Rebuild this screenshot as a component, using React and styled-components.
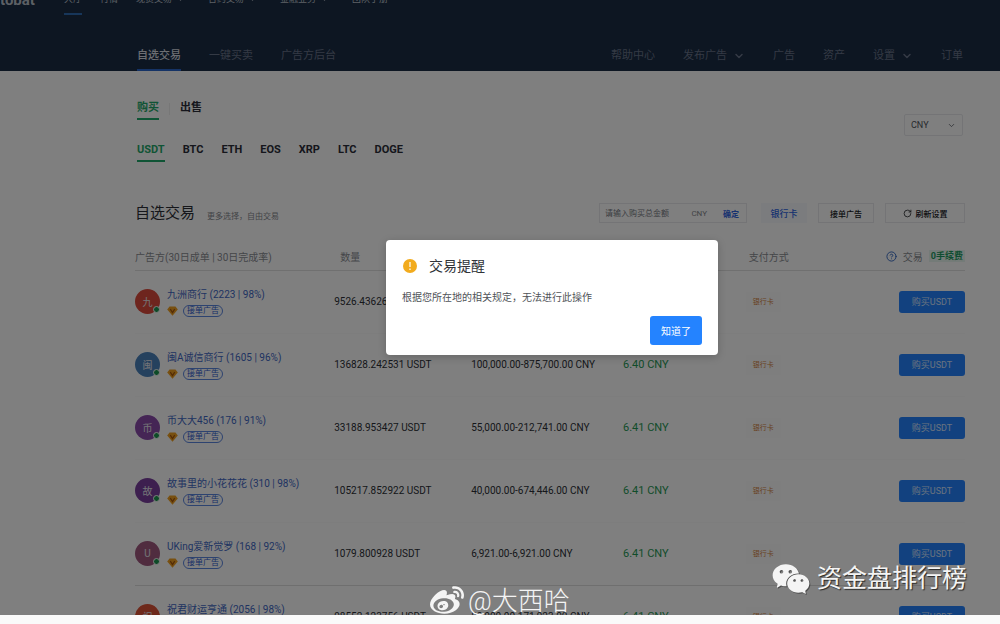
import React, { useState } from 'react';
import styled, { createGlobalStyle } from 'styled-components';
import { FaWeibo } from 'react-icons/fa';
import { AiFillWechat } from 'react-icons/ai';
import { ChevronDown, RotateCw, CircleHelp } from 'lucide-react';

const GlobalStyle = createGlobalStyle`
    * {
        box-sizing: border-box;
    }

    body {
        margin: 0;
        background: #fafafa;
        color: #2c2f36;
        font-family: Roboto, 'Noto Sans CJK SC', sans-serif;
        font-size: 10px;
    }

    button,
    input,
    select {
        font-family: inherit;
    }

    a {
        color: inherit;
        text-decoration: none;
    }
`;

const Screen = styled.div`
    position: relative;
    height: calc(100vh - 9px);
    overflow: hidden;
    background: #fff;
`;

const Header = styled.header`
    background: #1a2c44;
`;

const TopNav = styled.nav`
    display: flex;
    align-items: flex-end;
    height: 15px;
    overflow: hidden;
    color: #b9c0ca;
`;

const Logo = styled.a`
    width: 64px;
    font-size: 15px;
    font-weight: 700;
    line-height: 18px;
    padding-bottom: 6px;
`;

const TopLink = styled.a`
    display: flex;
    align-items: center;
    gap: 4px;
    margin-right: ${(props) => (props.$menu ? 23 : 18)}px;
    padding-bottom: 7px;
    border-bottom: 2px solid ${(props) => (props.$active ? '#2f6db5' : 'transparent')};
    font-size: 9px;
    line-height: 14px;
    white-space: nowrap;
`;

const SubNav = styled.nav`
    display: flex;
    justify-content: space-between;
    padding: 29px 37px 0 137px;
`;

const NavGroup = styled.div`
    display: flex;
    gap: 28px;
`;

const NavLink = styled.a`
    display: flex;
    align-items: center;
    gap: 6px;
    padding-bottom: 1px;
    border-bottom: 2px solid ${(props) => (props.$active ? '#2a66cc' : 'transparent')};
    color: ${(props) => (props.$active ? '#d9dde4' : '#69748a')};
    font-size: 11px;
    font-weight: ${(props) => (props.$active ? 500 : 400)};
    line-height: 24px;
`;

const Content = styled.main`
    padding: 26px 35px 0 135px;
`;

const Filters = styled.section`
    display: flex;
    justify-content: space-between;
    align-items: flex-start;
`;

const Tabs = styled.div`
    display: flex;
    align-items: center;
    gap: ${(props) => props.$gap}px;
    margin-bottom: 19px;
    padding-left: 2px;
`;

const Tab = styled.button`
    padding: 2px 0 1px;
    border: 0;
    border-bottom: 2px solid ${(props) => (props.$active ? '#1fa86a' : 'transparent')};
    background: none;
    color: ${(props) => (props.$active ? '#1fa86a' : '#2a2d38')};
    font-size: 11px;
    font-weight: 700;
    line-height: 18px;
`;

const TabDivider = styled.span`
    width: 1px;
    height: 12px;
    background: #efefef;
`;

const SelectBox = styled.label`
    display: flex;
    align-items: center;
    width: 59px;
    height: 22px;
    margin-top: 17px;
    margin-right: 2px;
    padding: 0 6px;
    border: 1px solid #e8e9ec;
    border-radius: 2px;
    color: #50545c;
`;

const Select = styled.select`
    flex: 1;
    min-width: 0;
    border: 0;
    padding: 0;
    appearance: none;
    background: none;
    color: inherit;
    font-size: 9px;
`;

const Toolbar = styled.section`
    display: flex;
    align-items: center;
    justify-content: space-between;
    margin-top: 22px;
`;

const Heading = styled.div`
    display: flex;
    align-items: center;
    gap: 12px;
`;

const Title = styled.h1`
    margin: 0;
    font-size: 15px;
    font-weight: 400;
    line-height: 20px;
`;

const Hint = styled.span`
    padding-top: 4px;
    color: #85888e;
    font-size: 8px;
`;

const Actions = styled.div`
    display: flex;
    align-items: center;
`;

const AmountBox = styled.form`
    display: flex;
    align-items: center;
    width: 148px;
    height: 20px;
    margin-right: 14px;
    padding: 0 7px 0 5px;
    border: 1px solid #e8e9ec;
    color: #85888e;
    font-size: 8px;
`;

const AmountInput = styled.input`
    flex: 1;
    min-width: 0;
    padding: 0;
    border: 0;
    background: none;
    font-size: 8px;

    &::placeholder {
        color: #777b84;
    }
`;

const ConfirmButton = styled.button`
    margin-left: 16px;
    padding: 0;
    border: 0;
    background: none;
    color: #2c62e0;
    font-size: 8px;
    font-weight: 700;
`;

const ToolButton = styled.button`
    display: flex;
    align-items: center;
    justify-content: center;
    gap: 4px;
    width: ${(props) => props.$width}px;
    height: 20px;
    margin-left: ${(props) => (props.$selected ? 0 : 11)}px;
    padding: 0;
    border: 1px solid ${(props) => (props.$selected ? '#f6f9fd' : '#e8e9ec')};
    background: ${(props) => (props.$selected ? '#f6f9fd' : '#fff')};
    color: ${(props) => (props.$selected ? '#2c62e0' : '#16181c')};
    font-size: ${(props) => (props.$selected ? 9 : 8)}px;
    font-weight: 500;
`;

const Table = styled.table`
    width: 100%;
    margin-top: 20px;
    border-collapse: collapse;
    table-layout: fixed;
    white-space: nowrap;
`;

const HeadCell = styled.th`
    height: 27px;
    padding: 0 0 0 ${(props) => props.$indent || 0}px;
    border-bottom: 1px solid #e0e0e0;
    color: #8a8d93;
    font-weight: 400;
    text-align: left;
`;

const Cell = styled.td`
    height: 63px;
    padding: 0;
    border-bottom: 1px solid #fafafa;
    text-align: left;

    tr:nth-child(5) > & {
        border-bottom-color: #dedede;
    }
`;

const PayRow = styled.div`
    display: flex;
    align-items: center;
    justify-content: space-between;
`;

const TradeHead = styled.div`
    display: flex;
    align-items: center;
    justify-content: flex-end;
    gap: 6px;
`;

const FreeTag = styled.span`
    padding: 0 2px;
    background: #e9f7f0;
    color: #1c9c62;
    font-size: 9px;
    font-weight: 700;
    line-height: 12px;
`;

const Seller = styled.div`
    display: flex;
    align-items: center;
    gap: 7px;
`;

const Avatar = styled.div`
    position: relative;
    display: grid;
    place-items: center;
    width: 25px;
    height: 25px;
    border-radius: 50%;
    background: ${(props) => props.$color};
    color: #e8e8ee;
    font-size: 10px;
`;

const OnlineDot = styled.span`
    position: absolute;
    right: 0;
    bottom: 1px;
    width: 7px;
    height: 7px;
    border: 1px solid #fff;
    border-radius: 50%;
    background: #1d9650;
`;

const SellerName = styled.a`
    display: block;
    color: #3f67c4;
    font-size: 10px;
    line-height: 15px;
`;

const Badges = styled.div`
    display: flex;
    align-items: center;
    gap: 5px;
    margin-top: 3px;
`;

const Pill = styled.span`
    padding: 0 3px;
    border: 1px solid #5b86e0;
    border-radius: 6px;
    color: #2f60cf;
    font-size: 8px;
    line-height: 10px;
`;

const Price = styled.span`
    color: #1f9a55;
    font-size: 11px;
`;

const PayTag = styled.span`
    display: inline-block;
    padding: 4px 7px;
    background: #fdfdfd;
    color: #d2823c;
    font-size: 7px;
    line-height: 12px;
`;

const BuyButton = styled.button`
    width: 66px;
    height: 22px;
    padding: 0;
    border: 0;
    border-radius: 3px;
    background: #2483ff;
    color: #d4e4ff;
    font-size: 9px;
`;

const Overlay = styled.div`
    position: absolute;
    inset: 0;
    display: flex;
    align-items: flex-start;
    justify-content: center;
    padding: 240px 0 0 104px;
    background: rgba(0, 0, 0, 0.5);
`;

const Dialog = styled.div`
    width: 332px;
    padding: 16px 16px 10px;
    border-radius: 4px;
    background: #fff;
    box-shadow: 0 2px 8px rgba(0, 0, 0, 0.2);
`;

const DialogTitle = styled.h2`
    display: flex;
    align-items: center;
    gap: 12px;
    margin: 0;
    padding-left: 1px;
    color: #303338;
    font-size: 14px;
    font-weight: 400;
    line-height: 20px;
`;

const DialogText = styled.p`
    margin: 14px 0 10px;
    color: #505358;
    font-size: 10px;
    line-height: 16px;
`;

const DialogFooter = styled.div`
    display: flex;
    justify-content: flex-end;
`;

const DialogButton = styled.button`
    width: 52px;
    height: 29px;
    padding: 0;
    border: 0;
    border-radius: 3px;
    background: #2483ff;
    color: #fff;
    font-size: 10px;
`;

const Watermark = styled.div`
    position: absolute;
    display: flex;
    align-items: center;
    color: #f4f4f4;
    line-height: 30px;
    white-space: nowrap;
`;

const WeiboMark = styled(Watermark)`
    left: 43%;
    bottom: 6px;
    gap: 4px;
    font-size: 26px;
    font-weight: 300;
`;

const WechatMark = styled(Watermark)`
    right: 33px;
    bottom: 24px;
    gap: 5px;
    font-size: 25px;
    text-shadow: 1px 1px 1px rgba(0, 0, 0, 0.7);

    svg {
        filter: drop-shadow(1px 1px 0 rgba(0, 0, 0, 0.4));
    }
`;

const topLinks = [
    { text: '大厅', active: true },
    { text: '行情' },
    { text: '现货交易', menu: true },
    { text: '合约交易', menu: true },
    { text: '金融业务', menu: true },
    { text: '团队手册' },
];

const userLinks = [
    { text: '帮助中心' },
    { text: '发布广告', menu: true },
    { text: '广告' },
    { text: '资产' },
    { text: '设置', menu: true },
    { text: '订单' },
];

const coins = ['USDT', 'BTC', 'ETH', 'EOS', 'XRP', 'LTC', 'DOGE'];

const columns = ['24%', '16.5%', '18.3%', '14.8%', '26.4%'];

const sellers = [
    { name: '九洲商行', stat: '(2223 | 98%)', mark: '九', color: '#dc4a3c', amount: '9526.436260 USDT', limit: '10,000.00-61,064.00 CNY', price: '6.40' },
    { name: '闽A诚信商行', stat: '(1605 | 96%)', mark: '闽', color: '#4a82bd', amount: '136828.242531 USDT', limit: '100,000.00-875,700.00 CNY', price: '6.40' },
    { name: '币大大456', stat: '(176 | 91%)', mark: '币', color: '#8a4bab', amount: '33188.953427 USDT', limit: '55,000.00-212,741.00 CNY', price: '6.41' },
    { name: '故事里的小花花花', stat: '(310 | 98%)', mark: '故', color: '#7a3f9e', amount: '105217.852922 USDT', limit: '40,000.00-674,446.00 CNY', price: '6.41' },
    { name: 'UKing爱新觉罗', stat: '(168 | 92%)', mark: 'U', color: '#a0587f', amount: '1079.800928 USDT', limit: '6,921.00-6,921.00 CNY', price: '6.41' },
    { name: '祝君财运亨通', stat: '(2056 | 98%)', mark: '祝', color: '#dd5236', amount: '98552.123756 USDT', limit: '80,000.00-171,923.00 CNY', price: '6.41' },
];

function Diamond() {
    return (
        <svg width="11" height="10" viewBox="0 0 11 10">
            <path d="M2.5 0.5h6L10.8 3.4 5.5 9.8 0.2 3.4z" fill="#f0a020" />
            <path d="M3.3 3.2l2.2 3.4 2.2-3.4" fill="none" stroke="#a8560c" strokeWidth="1.2" />
        </svg>
    );
}

function WarningIcon() {
    return (
        <svg width="14" height="14" viewBox="0 0 14 14">
            <circle cx="7" cy="7" r="7" fill="#f2ab1d" />
            <path d="M7 3v5M7 9.6v1.4" stroke="#fff" strokeWidth="1.2" />
        </svg>
    );
}

function SellerRow({ seller }) {
    return (
        <tr>
            <Cell>
                <Seller>
                    <Avatar $color={seller.color}>
                        {seller.mark}
                        <OnlineDot />
                    </Avatar>
                    <div>
                        <SellerName href="#">
                            {seller.name} {seller.stat}
                        </SellerName>
                        <Badges>
                            <Diamond />
                            <Pill>接单广告</Pill>
                        </Badges>
                    </div>
                </Seller>
            </Cell>
            <Cell>{seller.amount}</Cell>
            <Cell>{seller.limit}</Cell>
            <Cell>
                <Price>{seller.price} CNY</Price>
            </Cell>
            <Cell>
                <PayRow>
                    <PayTag>银行卡</PayTag>
                    <BuyButton type="button">购买USDT</BuyButton>
                </PayRow>
            </Cell>
        </tr>
    );
}

export default function App() {
    const [coin, setCoin] = useState('USDT');
    const [open, setOpen] = useState(true);

    return (
        <>
            <GlobalStyle />
            <Screen>
                <Header>
                    <TopNav>
                        <Logo href="#">tobat</Logo>
                        {topLinks.map((link) => (
                            <TopLink key={link.text} href="#" $active={link.active} $menu={link.menu}>
                                {link.text}
                                {link.menu && <ChevronDown size={9} />}
                            </TopLink>
                        ))}
                    </TopNav>
                    <SubNav>
                        <NavGroup>
                            <NavLink href="#" $active>自选交易</NavLink>
                            <NavLink href="#">一键买卖</NavLink>
                            <NavLink href="#">广告方后台</NavLink>
                        </NavGroup>
                        <NavGroup>
                            {userLinks.map((link) => (
                                <NavLink key={link.text} href="#">
                                    {link.text}
                                    {link.menu && <ChevronDown size={12} strokeWidth={3} />}
                                </NavLink>
                            ))}
                        </NavGroup>
                    </SubNav>
                </Header>
                <Content>
                    <Filters>
                        <div>
                            <Tabs $gap={10}>
                                <Tab $active>购买</Tab>
                                <TabDivider />
                                <Tab>出售</Tab>
                            </Tabs>
                            <Tabs $gap={18}>
                                {coins.map((item) => (
                                    <Tab key={item} $active={item === coin} onClick={() => setCoin(item)}>
                                        {item}
                                    </Tab>
                                ))}
                            </Tabs>
                        </div>
                        <SelectBox>
                            <Select aria-label="法币">
                                <option>CNY</option>
                            </Select>
                            <ChevronDown size={9} />
                        </SelectBox>
                    </Filters>
                    <Toolbar>
                        <Heading>
                            <Title>自选交易</Title>
                            <Hint>更多选择，自由交易</Hint>
                        </Heading>
                        <Actions>
                            <AmountBox>
                                <AmountInput aria-label="购买总金额" placeholder="请输入购买总金额" />
                                CNY
                                <ConfirmButton type="button">确定</ConfirmButton>
                            </AmountBox>
                            <ToolButton $selected $width={46}>银行卡</ToolButton>
                            <ToolButton $width={56}>接单广告</ToolButton>
                            <ToolButton $width={80}>
                                <RotateCw size={9} />
                                刷新设置
                            </ToolButton>
                        </Actions>
                    </Toolbar>
                    <Table>
                        <colgroup>
                            {columns.map((width) => (
                                <col key={width} width={width} />
                            ))}
                        </colgroup>
                        <thead>
                            <tr>
                                <HeadCell>广告方(30日成单 | 30日完成率)</HeadCell>
                                <HeadCell $indent={6}>数量</HeadCell>
                                <HeadCell>限额</HeadCell>
                                <HeadCell>单价</HeadCell>
                                <HeadCell $indent={3}>
                                    <PayRow>
                                        支付方式
                                        <TradeHead>
                                            <CircleHelp size={11} color="#2c62c0" />
                                            交易
                                            <FreeTag>0手续费</FreeTag>
                                        </TradeHead>
                                    </PayRow>
                                </HeadCell>
                            </tr>
                        </thead>
                        <tbody>
                            {sellers.map((seller) => (
                                <SellerRow key={seller.name} seller={seller} />
                            ))}
                        </tbody>
                    </Table>
                </Content>
                {open && (
                    <Overlay>
                        <Dialog role="dialog" aria-labelledby="dialog-title">
                            <DialogTitle id="dialog-title">
                                <WarningIcon />
                                交易提醒
                            </DialogTitle>
                            <DialogText>根据您所在地的相关规定，无法进行此操作</DialogText>
                            <DialogFooter>
                                <DialogButton type="button" onClick={() => setOpen(false)}>
                                    知道了
                                </DialogButton>
                            </DialogFooter>
                        </Dialog>
                    </Overlay>
                )}
            </Screen>
            <WeiboMark>
                <FaWeibo size={34} />
                @大西哈
            </WeiboMark>
            <WechatMark>
                <AiFillWechat size={42} />
                资金盘排行榜
            </WechatMark>
        </>
    );
}
